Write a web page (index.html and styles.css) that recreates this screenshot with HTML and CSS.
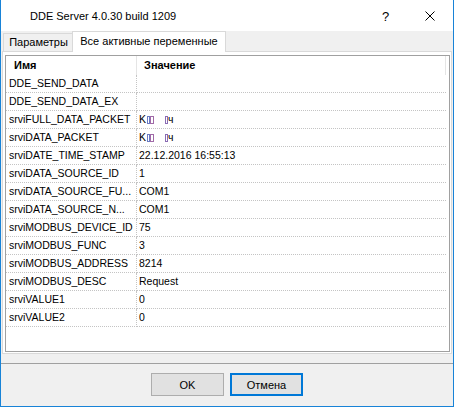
FILE: index.html
```html
<!DOCTYPE html>
<html lang="ru">
<head>
<meta charset="utf-8">
<title>DDE Server</title>
<link rel="stylesheet" href="styles.css">
</head>
<body>
<div class="window">
  <div class="titlebar">
    <span class="title">DDE Server 4.0.30 build 1209</span>
    <span class="tbtn help">?</span>
    <span class="tbtn close"><svg width="10" height="10" viewBox="0 0 10 10"><path d="M0.5 0.5 L9.5 9.5 M9.5 0.5 L0.5 9.5" stroke="#000" stroke-width="1" fill="none"/></svg></span>
  </div>
  <div class="client">
    <div class="tabs">
      <div class="tab">Параметры</div>
      <div class="tab active">Все активные переменные</div>
    </div>
    <div class="panel">
      <div class="listview">
        <div class="row head"><div class="c1">Имя</div><div class="c2">Значение</div></div>
        <div class="row"><div class="c1">DDE_SEND_DATA</div><div class="c2"></div></div>
        <div class="row"><div class="c1">DDE_SEND_DATA_EX</div><div class="c2"></div></div>
        <div class="row"><div class="c1">srviFULL_DATA_PACKET</div><div class="c2">K<span class="gl w"></span><span class="gl v"></span><span class="sp"></span><span class="gl n"></span>ч</div></div>
        <div class="row"><div class="c1">srviDATA_PACKET</div><div class="c2">K<span class="gl w"></span><span class="gl v"></span><span class="sp"></span><span class="gl n"></span>ч</div></div>
        <div class="row"><div class="c1">srviDATE_TIME_STAMP</div><div class="c2">22.12.2016 16:55:13</div></div>
        <div class="row"><div class="c1">srviDATA_SOURCE_ID</div><div class="c2">1</div></div>
        <div class="row"><div class="c1">srviDATA_SOURCE_FU...</div><div class="c2">COM1</div></div>
        <div class="row"><div class="c1">srviDATA_SOURCE_N...</div><div class="c2">COM1</div></div>
        <div class="row"><div class="c1">srviMODBUS_DEVICE_ID</div><div class="c2">75</div></div>
        <div class="row"><div class="c1">srviMODBUS_FUNC</div><div class="c2">3</div></div>
        <div class="row"><div class="c1">srviMODBUS_ADDRESS</div><div class="c2">8214</div></div>
        <div class="row"><div class="c1">srviMODBUS_DESC</div><div class="c2">Request</div></div>
        <div class="row"><div class="c1">srviVALUE1</div><div class="c2">0</div></div>
        <div class="row"><div class="c1">srviVALUE2</div><div class="c2">0</div></div>
      </div>
    </div>
    <div class="sep"></div>
    <div class="buttons">
      <button class="btn">OK</button>
      <button class="btn default">Отмена</button>
    </div>
  </div>
</div>
</body>
</html>
```
FILE: styles.css
```css
html, body {
  margin: 0;
  padding: 0;
  background: #ffffff;
}
body {
  font-family: "Liberation Sans", Arial, sans-serif;
  color: #000;
}
.window {
  width: 454px;
  height: 407px;
  box-sizing: border-box;
  border: 1px solid #1883d7;
  border-top: none;
  display: flex;
  flex-direction: column;
  background: #f0f0f0;
}
.titlebar {
  height: 31px;
  flex: none;
  background: #ffffff;
  display: flex;
  align-items: center;
}
.title {
  flex: 1;
  padding-left: 29px;
  font-size: 11px;
  padding-top: 1px;
}
.tbtn {
  width: 46px;
  height: 31px;
  display: flex;
  align-items: center;
  justify-content: center;
}
.help {
  font-size: 13px;
  padding-left: 3px;
  box-sizing: border-box;
  padding-top: 1px;
}
.close svg {
  display: block;
  margin-top: 1px;
}
.client {
  flex: 1;
  padding: 0 1px;
  display: flex;
  flex-direction: column;
}
.tabs {
  height: 20px;
  display: flex;
  align-items: flex-end;
  padding-left: 1px;
}
.tab {
  box-sizing: border-box;
  height: 18px;
  width: 70px;
  border: 1px solid #d9d9d9;
  border-bottom: none;
  background: #f0f0f0;
  font-size: 11px;
  line-height: 17px;
  text-align: center;
  padding-left: 1px;
}
.tab.active {
  height: 21px;
  width: 154px;
  margin-left: -1px;
  margin-bottom: -1px;
  background: #ffffff;
  position: relative;
  z-index: 1;
  line-height: 19px;
  padding-left: 0;
}
.panel {
  height: 303px;
  box-sizing: border-box;
  border: 1px solid #d9d9d9;
  background: #ffffff;
  padding: 3px 1px 1px 2px;
}
.listview {
  height: 100%;
  box-sizing: border-box;
  border: 1px solid #a0a0a0;
  background: #ffffff;
  font-size: 10.5px;
}
.row {
  display: flex;
  height: 18px;
}
.c1, .c2 {
  box-sizing: border-box;
  height: 18px;
  line-height: 17px;
  white-space: nowrap;
  overflow: hidden;
  border-bottom: 1px dotted #c4c4c4;
}
.c1 {
  width: 131px;
  padding-left: 3px;
  border-right: 1px dotted #c4c4c4;
}
.c2 {
  width: 309px;
  padding-left: 2px;
}
.row.head {
  height: 19px;
}
.row.head .c1, .row.head .c2 {
  height: 19px;
  line-height: 19px;
  border-bottom: none;
  font-weight: bold;
  font-size: 11px;
}
.row.head .c1 {
  padding-left: 8px;
  border-right: 1px solid #e5e5e5;
}
.row.head .c2 {
  padding-left: 7px;
  border-right: 1px solid #e5e5e5;
}
.gl {
  display: inline-block;
  box-sizing: border-box;
  height: 8px;
  width: 3px;
  vertical-align: -1px;
  border: 1px solid #7b6cb8;
}
.gl.w {
  margin-left: 1px;
  border-color: #6a7ac4;
}
.gl.v {
  border-color: #a06aa8;
  width: 4px;
}
.gl.n {
  border-color: #8a6cb4;
}
.sp {
  display: inline-block;
  width: 11px;
}
.sep {
  height: 1px;
  background: #a0a0a0;
  margin: 9px -1px 0;
}
.buttons {
  display: flex;
  justify-content: center;
  gap: 6px;
  margin-top: 9px;
}
.btn {
  width: 73px;
  height: 23px;
  box-sizing: border-box;
  border: 1px solid #adadad;
  background: #e1e1e1;
  font-family: "Liberation Sans", Arial, sans-serif;
  font-size: 11px;
  color: #000;
  padding: 0;
  margin: 0;
}
.btn.default {
  border: 2px solid #0078d7;
}
```
